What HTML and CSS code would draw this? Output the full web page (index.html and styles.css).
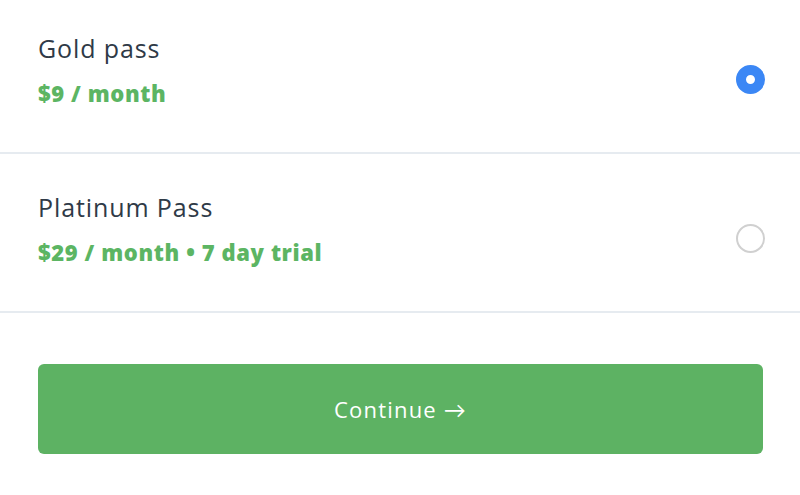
FILE: index.html
```html
<!DOCTYPE html>
<html>
<head>
<meta charset="utf-8">
<link rel="stylesheet" href="styles.css">
</head>
<body>
<div class="plans">
  <label class="plan plan-first">
    <div class="plan-text">
      <div class="plan-name">Gold pass</div>
      <div class="plan-price">$9 / month</div>
    </div>
    <span class="radio radio-on"></span>
  </label>
  <label class="plan">
    <div class="plan-text">
      <div class="plan-name">Platinum Pass</div>
      <div class="plan-price">$29 / month • 7 day trial</div>
    </div>
    <span class="radio"></span>
  </label>
</div>
<div class="actions">
  <button class="continue">Continue →</button>
</div>
</body>
</html>
```
FILE: styles.css
```css
html, body {
  margin: 0;
  padding: 0;
  background: #ffffff;
  font-family: "Open Sans", Lato, sans-serif;
  overflow: hidden;
}

.plans {
  display: flex;
  flex-direction: column;
}

.plan {
  display: flex;
  align-items: center;
  justify-content: space-between;
  height: 157px;
  padding: 0 35px 0 38px;
  border-bottom: 2px solid #e6ebf0;
}

.plan-first {
  margin-top: -5px;
}

.plan-text {
  display: flex;
  flex-direction: column;
  gap: 14px;
  margin-bottom: 6px;
}

.plan-name {
  font-size: 25px;
  line-height: 31px;
  letter-spacing: 0.9px;
  color: #2f3a47;
}

.plan-price {
  font-size: 22px;
  line-height: 30px;
  font-weight: 800;
  letter-spacing: 0.6px;
  color: #5cb563;
}

.radio {
  box-sizing: border-box;
  width: 29px;
  height: 29px;
  border-radius: 50%;
  border: 2px solid #d0d0d0;
  margin-top: 12px;
  background: #fff;
}

.radio-on {
  border: 10px solid #3b87f5;
}

.actions {
  padding: 51px 37px 0 38px;
}

.continue {
  display: block;
  width: 100%;
  height: 90px;
  border: none;
  border-radius: 6px;
  background: #5db263;
  color: #ffffff;
  font-family: "Open Sans", Lato, sans-serif;
  font-size: 22px;
  letter-spacing: 1.2px;
}
```
